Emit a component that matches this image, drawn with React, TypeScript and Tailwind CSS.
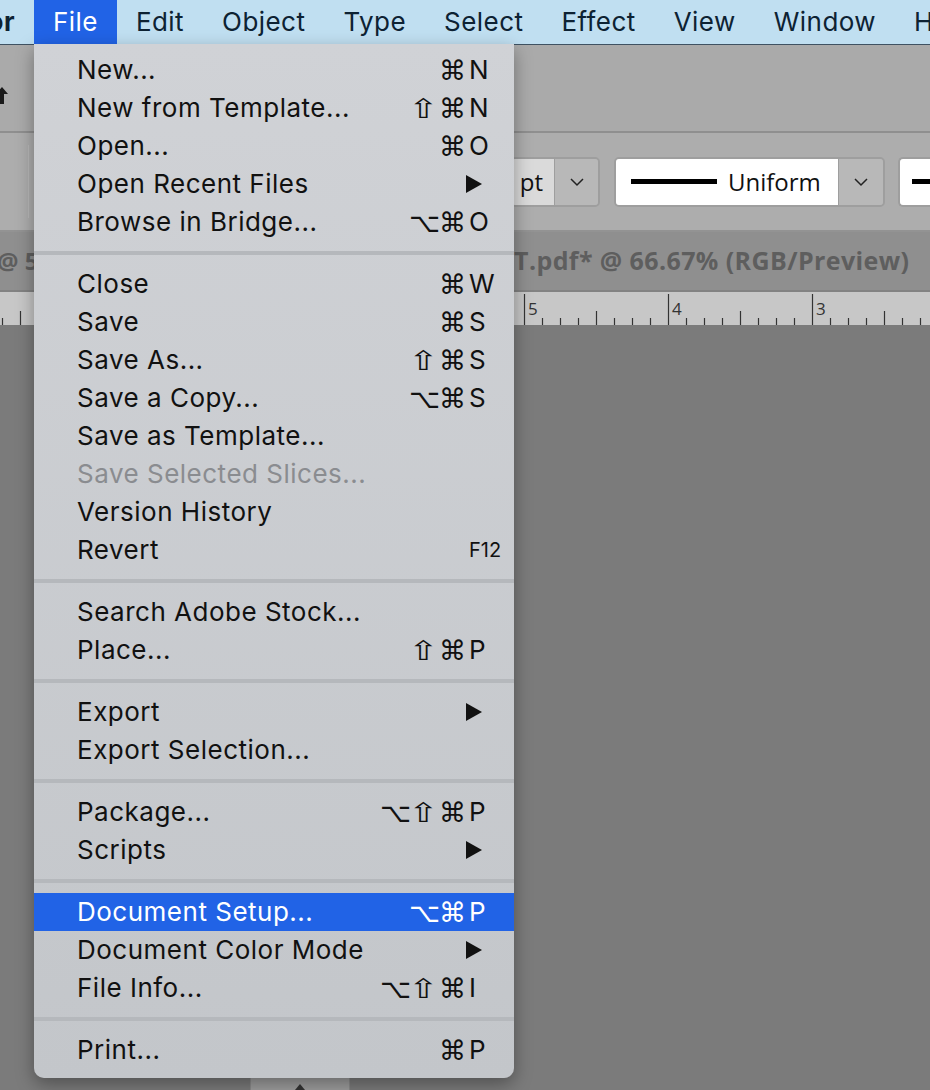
import React from 'react';

type Item = { label: string; mods?: string[]; keyName?: string; sub?: boolean; disabled?: boolean; active?: boolean; small?: boolean };

const SECTIONS: Item[][] = [
    [
        { label: 'New...', mods: ['⌘'], keyName: 'N' },
        { label: 'New from Template...', mods: ['⇧', '⌘'], keyName: 'N' },
        { label: 'Open...', mods: ['⌘'], keyName: 'O' },
        { label: 'Open Recent Files', sub: true },
        { label: 'Browse in Bridge...', mods: ['⌥', '⌘'], keyName: 'O' },
    ],
    [
        { label: 'Close', mods: ['⌘'], keyName: 'W' },
        { label: 'Save', mods: ['⌘'], keyName: 'S' },
        { label: 'Save As...', mods: ['⇧', '⌘'], keyName: 'S' },
        { label: 'Save a Copy...', mods: ['⌥', '⌘'], keyName: 'S' },
        { label: 'Save as Template...' },
        { label: 'Save Selected Slices...', disabled: true },
        { label: 'Version History' },
        { label: 'Revert', keyName: 'F12', small: true },
    ],
    [
        { label: 'Search Adobe Stock...' },
        { label: 'Place...', mods: ['⇧', '⌘'], keyName: 'P' },
    ],
    [
        { label: 'Export', sub: true },
        { label: 'Export Selection...' },
    ],
    [
        { label: 'Package...', mods: ['⌥', '⇧', '⌘'], keyName: 'P' },
        { label: 'Scripts', sub: true },
    ],
    [
        { label: 'Document Setup...', mods: ['⌥', '⌘'], keyName: 'P', active: true },
        { label: 'Document Color Mode', sub: true },
        { label: 'File Info...', mods: ['⌥', '⇧', '⌘'], keyName: 'I' },
    ],
    [
        { label: 'Print...', mods: ['⌘'], keyName: 'P' },
    ],
];

const MENUS = ['Edit', 'Object', 'Type', 'Select', 'Effect', 'View', 'Window', 'Help'];

const sysFont = { fontFamily: 'Inter, "Noto Sans", sans-serif' };
const glyphFont = { fontFamily: '"DejaVu Sans", sans-serif' };
const adobeFont = { fontFamily: '"Open Sans", "Noto Sans", sans-serif' };

function Chevron() {
    return (
        <svg width="16" height="10" viewBox="0 0 16 10" className="text-[#222]">
            <path d="M2 2l6 6 6-6" fill="none" stroke="currentColor" strokeWidth="1.5" />
        </svg>
    );
}

function Ruler() {
    const ticks = [];
    for (let x = 2; x < 930; x += 18) {
        const major = (x - 524) % 144 === 0;
        const mid = !major && (x - 524 - 72) % 144 === 0;
        ticks.push(<line key={x} x1={x + 0.5} x2={x + 0.5} y1={major ? 2 : mid ? 19 : 26} y2={33} stroke="#333" strokeWidth="1.2" />);
    }
    return (
        <svg width="930" height="33" className="block">
            {ticks}
            <text x="528" y="23" fontSize="17" fill="#333" fontFamily="Open Sans, sans-serif">5</text>
            <text x="672" y="23" fontSize="17" fill="#333" fontFamily="Open Sans, sans-serif">4</text>
            <text x="816" y="23" fontSize="17" fill="#333" fontFamily="Open Sans, sans-serif">3</text>
        </svg>
    );
}

function MenuRow({ item }: { item: Item }) {
    const color = item.active ? 'bg-[#2163e6] text-white' : item.disabled ? 'text-[#8a8c90]' : 'text-[#111]';
    return (
        <div className={`h-[38px] flex items-center pl-[43px] ${color}`}>
            <span className="flex-1 text-[26px] tracking-[0.5px] leading-none whitespace-nowrap">{item.label}</span>
            <span className="flex justify-end" style={glyphFont}>
                {item.mods?.map((m, i) => (
                    <span key={i} className={`w-[29px] text-center text-[27px] leading-none ${m === '⇧' ? 'inline-block scale-x-[1.35]' : ''}`}>{m}</span>
                ))}
            </span>
            <span className="w-[47px] pl-[2px] flex items-center">
                {item.sub ? (
                    <svg width="18" height="20" viewBox="0 0 18 20" className="-ml-[4px]">
                        <path d="M1 1l16 9-16 9z" fill="currentColor" />
                    </svg>
                ) : (
                    <span className={item.small ? 'text-[20px] leading-none' : 'text-[26px] leading-none'}>{item.keyName}</span>
                )}
            </span>
        </div>
    );
}

export default function App() {
    return (
        <div className="relative w-[930px] h-[1090px] overflow-hidden bg-[#7b7b7b] flex flex-col" style={sysFont}>
            {/* system menu bar */}
            <div className="h-[45px] shrink-0 flex bg-[#c0dff1] border-b border-[#3f5262] text-[#0d2233] text-[26px] tracking-[0.45px] leading-none">
                <div className="w-[34px] shrink-0 overflow-hidden flex justify-end items-center pr-[19px]">
                    <span className="whitespace-nowrap font-bold">Illustrator</span>
                </div>
                <div className="shrink-0 px-[19px] flex items-center bg-[#2163e6] text-white">File</div>
                {MENUS.map(m => (
                    <div key={m} className="shrink-0 px-[19px] flex items-center whitespace-nowrap">{m}</div>
                ))}
            </div>

            {/* app bar */}
            <div className="h-[88px] shrink-0 bg-[#aaaaaa] border-b-2 border-[#8f8f8f] relative">
                <svg width="12" height="20" viewBox="0 0 12 20" className="absolute left-[-4px] top-[42px]">
                    <path d="M6 0l6 7H8v10H4V7H0z" fill="#1a1a1a" />
                </svg>
            </div>

            {/* control bar */}
            <div className="h-[99px] shrink-0 bg-[#adadad] border-b-2 border-[#939393] flex items-center" style={adobeFont}>
                <div className="w-[29px] shrink-0 self-stretch border-r border-[#b8b8b8] my-[12px]" />
                <div className="ml-[481px] shrink-0 h-[50px] flex rounded-[5px] border-2 border-[#9e9e9e] overflow-hidden">
                    <div className="w-[42px] shrink-0 bg-[#dadada] flex items-center justify-end pr-[11px] text-[24px] text-[#111]">pt</div>
                    <div className="w-[44px] shrink-0 bg-[#b8b8b8] border-l border-[#9e9e9e] flex items-center justify-center"><Chevron /></div>
                </div>
                <div className="ml-[14px] shrink-0 h-[50px] flex rounded-[5px] border-2 border-[#9e9e9e] overflow-hidden">
                    <div className="w-[222px] shrink-0 bg-white flex items-center pl-[15px] gap-[11px] text-[24px] text-[#111]">
                        <div className="w-[86px] h-[5px] bg-black" />
                        <span>Uniform</span>
                    </div>
                    <div className="w-[45px] shrink-0 bg-[#b8b8b8] border-l border-[#9e9e9e] flex items-center justify-center"><Chevron /></div>
                </div>
                <div className="ml-[13px] h-[50px] flex-1 rounded-l-[5px] border-2 border-r-0 border-[#9e9e9e] bg-white flex items-center pl-[12px]">
                    <div className="w-[40px] h-[5px] bg-black" />
                </div>
            </div>

            {/* document tabs */}
            <div className="h-[60px] shrink-0 bg-[#8f8f8f] border-b-2 border-[#828282] flex items-center text-[#5e5e5e] font-bold whitespace-nowrap" style={adobeFont}>
                <div className="w-[34px] shrink-0 overflow-hidden flex text-[24px]">
                    <span className="-ml-[3px]">@ 50% (RGB/Preview)</span>
                </div>
                <div className="ml-[480px] flex-1 overflow-hidden flex text-[25px]">
                    <span className="tracking-[0.4px]">T.pdf* @ 66.67% (RGB/Preview)</span>
                </div>
            </div>

            {/* ruler */}
            <div className="h-[33px] shrink-0 bg-[#c7c7c7]">
                <Ruler />
            </div>

            {/* canvas */}
            <div className="flex-1 flex flex-col justify-end">
                <div className="ml-[250px] w-[100px] h-[12px] bg-[#9d9d9d] border-x border-[#8a8a8a] flex justify-center items-end">
                    <div className="w-0 h-0 border-x-[5px] border-x-transparent border-b-[6px] border-b-[#333]" />
                </div>
            </div>

            {/* File menu dropdown */}
            <div className="absolute left-[34px] top-[44px] w-[480px] pt-[7px] pb-[9px] rounded-b-[10px] bg-gradient-to-b from-[#d0d2d6] to-[#c3c6ca] shadow-[0_6px_18px_rgba(0,0,0,0.35)]">
                {SECTIONS.map((sec, si) => (
                    <div key={si}>
                        {si > 0 && (
                            <div className="h-[24px] flex items-center">
                                <div className="h-[4px] w-full bg-[#b5b8bc]" />
                            </div>
                        )}
                        {sec.map(item => <MenuRow key={item.label} item={item} />)}
                    </div>
                ))}
            </div>
        </div>
    );
}
